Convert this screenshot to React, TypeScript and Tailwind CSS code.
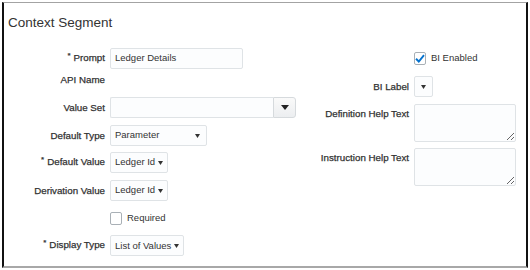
import React from "react";

const font = { fontFamily: '"Liberation Sans", Arial, sans-serif' };

function Caret({ big = false }: { big?: boolean }) {
  return big ? (
    <svg width="8" height="5" viewBox="0 0 8 5" className="shrink-0">
      <polygon points="0,0 8,0 4,5" fill="#222" />
    </svg>
  ) : (
    <svg width="5" height="4" viewBox="0 0 5 4" className="shrink-0">
      <polygon points="0,0 5,0 2.5,4" fill="#333" />
    </svg>
  );
}

function Label({ text, required }: { text: string; required?: boolean }) {
  return (
    <span className="text-[9.75px] leading-[12px] text-[#2b2b2b] whitespace-nowrap [-webkit-text-stroke:0.25px_#3a3a3a]">
      {required && <span className="relative -top-[3px] mr-[3px] text-[8px]">*</span>}
      {text}
    </span>
  );
}

function Select({ value, width }: { value: string; width: string }) {
  return (
    <div
      className={`${width} h-[21px] flex items-center justify-between gap-[3px] pl-[4px] pr-[6px] border border-[#dfe3e6] bg-[#fcfdfe] rounded-[2px]`}
    >
      <span className="text-[9.5px] text-[#333] whitespace-nowrap">{value}</span>
      <Caret />
    </div>
  );
}

function Row({ label, required, mt, children }: { label?: string; required?: boolean; mt: string; children?: React.ReactNode }) {
  return (
    <div className={`flex items-center ${mt}`}>
      <div className="w-[101px] flex justify-end">{label && <Label text={label} required={required} />}</div>
      <div className="ml-[5px]">{children}</div>
    </div>
  );
}

function Checkbox({ checked }: { checked?: boolean }) {
  return (
    <div className="w-[12px] h-[13px] border border-[#a9b0b6] bg-white rounded-[2px] flex items-center justify-center">
      {checked && (
        <svg width="10" height="9" viewBox="0 0 10 9">
          <path d="M1 4.8 L3.8 7.5 L9 1.2" fill="none" stroke="#0572ce" strokeWidth="1.9" />
        </svg>
      )}
    </div>
  );
}

export default function App() {
  return (
    <div className="w-[530px] h-[270px] bg-white pt-[2px] pl-[2px]" style={font}>
      <div className="w-[526px] h-[266px] border-t border-t-[#a3a3a3] border-b-2 border-b-[#a8a8a8] border-l-2 border-l-[#111] border-r-2 border-r-[#111] pt-[12px]">
        <div className="pl-[4px] text-[13.5px] leading-[16px] text-[#333]">Context Segment</div>

        <div className="flex mt-[17px]">
          {/* Left column */}
          <div className="w-[298px] flex flex-col">
            <Row label="Prompt" required mt="mt-0">
              <div className="w-[133px] h-[21px] flex items-center pl-[4px] border border-[#dfe3e6] bg-[#fcfdfe] rounded-[2px] text-[9.5px] text-[#333]">
                Ledger Details
              </div>
            </Row>
            <div className="flex items-center h-[14px] mt-[4px]">
              <div className="w-[101px] flex justify-end">
                <Label text="API Name" />
              </div>
            </div>
            <Row label="Value Set" mt="mt-[10px]">
              <div className="flex">
                <div className="w-[163px] h-[21px] border border-[#dfe3e6] border-r-0 bg-[#fcfdfe] rounded-l-[2px]" />
                <div className="w-[23px] h-[21px] flex items-center justify-center border border-[#d6dadd] bg-gradient-to-b from-[#fafafa] to-[#eceef0] rounded-r-[3px]">
                  <Caret big />
                </div>
              </div>
            </Row>
            <Row label="Default Type" mt="mt-[7px]">
              <Select value="Parameter" width="w-[97px]" />
            </Row>
            <Row label="Default Value" required mt="mt-[6px]">
              <Select value="Ledger Id" width="w-[58px]" />
            </Row>
            <Row label="Derivation Value" mt="mt-[7px]">
              <Select value="Ledger Id" width="w-[58px]" />
            </Row>
            <Row mt="mt-[10px]">
              <div className="flex items-center">
                <Checkbox />
                <span className="ml-[5px] text-[9.5px] text-[#333]">Required</span>
              </div>
            </Row>
            <Row label="Display Type" required mt="mt-[10px]">
              <Select value="List of Values" width="w-[74px]" />
            </Row>
          </div>

          {/* Right column */}
          <div className="flex flex-col">
            <div className="flex items-center h-[21px]">
              <div className="w-[107px]" />
              <div className="ml-[5px] flex items-center">
                <Checkbox checked />
                <span className="ml-[5px] text-[9.5px] text-[#333]">BI Enabled</span>
              </div>
            </div>
            <div className="flex items-center mt-[7px]">
              <div className="w-[107px] flex justify-end">
                <Label text="BI Label" />
              </div>
              <div className="ml-[5px] w-[19px] h-[21px] flex items-center justify-center border border-[#dfe3e6] bg-[#fcfdfe] rounded-[2px]">
                <Caret />
              </div>
            </div>
            <div className="flex items-start mt-[7px]">
              <div className="w-[107px] flex justify-end pt-[4px]">
                <Label text="Definition Help Text" />
              </div>
              <textarea className="ml-[5px] w-[102px] h-[38px] border border-[#dfe3e6] bg-[#fcfdfe] rounded-[2px] resize outline-none" />
            </div>
            <div className="flex items-start mt-[6px]">
              <div className="w-[107px] flex justify-end pt-[4px]">
                <Label text="Instruction Help Text" />
              </div>
              <textarea className="ml-[5px] w-[102px] h-[38px] border border-[#dfe3e6] bg-[#fcfdfe] rounded-[2px] resize outline-none" />
            </div>
          </div>
        </div>
      </div>
    </div>
  );
}
